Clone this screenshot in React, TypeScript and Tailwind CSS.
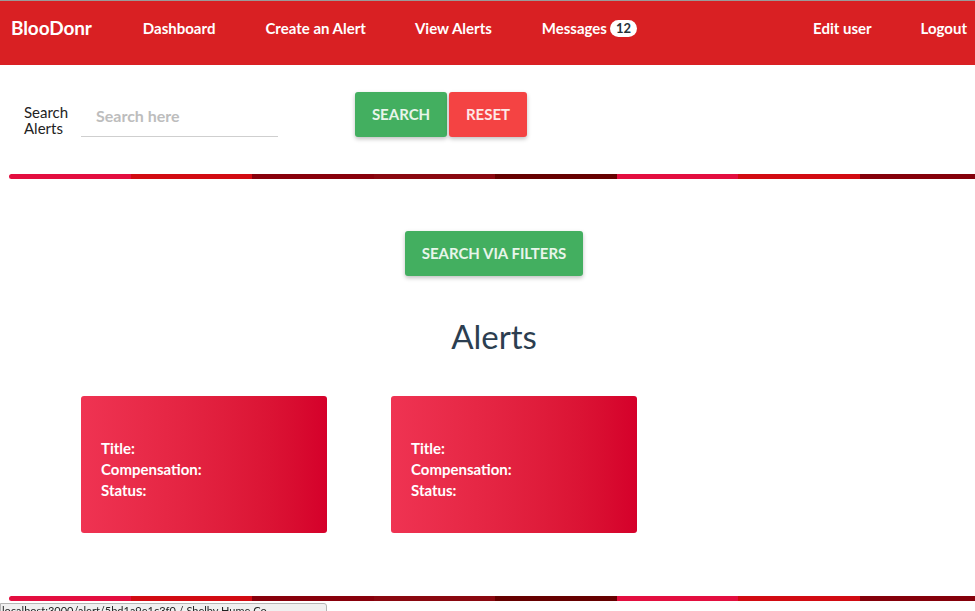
import React from 'react'

const stripeColors = ['#e30e3f', '#d20b12', '#88000b', '#8a0810', '#660000', '#e30e3f', '#d20b12', '#85000a', '#8a0810']

const Stripe = () => (
  <div className="flex h-[5px] ml-[9px] overflow-hidden rounded-l-full">
    {stripeColors.map((c, i) => (
      <div key={i} className="h-full w-[121.5px] shrink-0" style={{ backgroundColor: c }} />
    ))}
  </div>
)

const Card = () => (
  <div className="w-[246px] h-[137px] rounded-[3px] bg-gradient-to-r from-[#ef3352] to-[#d5002a] pl-[20px] pt-[42px] text-white font-bold text-[15px] leading-[21px]">
    <p>Title:</p>
    <p>Compensation:</p>
    <p>Status:</p>
  </div>
)

const App = () => {
  return (
    <div className="w-full h-[611px] overflow-hidden bg-white" style={{ fontFamily: 'Lato, "Noto Sans", sans-serif' }}>
      <div className="w-[988px]">
        <nav className="h-[65px] bg-[#d92023] border-t border-[#9a9a9a] flex items-center text-white font-bold text-[15px] pb-[9px]">
          <a className="pl-[11px] pr-[26px] text-[19px] tracking-[-0.1px]">BlooDonr</a>
          <a className="px-[25px]">Dashboard</a>
          <a className="px-[25px]">Create an Alert</a>
          <a className="pl-[24px] pr-[25px]">View Alerts</a>
          <a className="px-[25px] flex items-center">
            Messages
            <span className="ml-[3px] bg-white text-[#263238] rounded-full text-[13px] leading-[17px] px-[6px]">12</span>
          </a>
          <div className="ml-auto flex items-center">
            <a className="pl-[25px] pr-[24px]">Edit user</a>
            <a className="pl-[25px] pr-[21px]">Logout</a>
          </div>
        </nav>

        <div className="flex items-start pt-[27px] h-[109px]">
          <label className="ml-[24px] mt-[12px] w-[57px] text-[15px] leading-[16px] text-[#222]">
            <span className="block">Search</span>
            <span className="block">Alerts</span>
          </label>
          <div className="w-[197px] mt-[6px] border-b border-[#cfcfcf] h-[39px] flex items-center pl-[15px] pb-[2px] text-[16px] text-[#bdbdbd] font-bold">
            Search here
          </div>
          <button className="ml-[77px] w-[92px] h-[45px] rounded-[3px] bg-[#43af60] text-[#e8f5ea] font-bold text-[15px] shadow-[0_2px_4px_rgba(0,0,0,0.25)]">SEARCH</button>
          <button className="ml-[2px] w-[78px] h-[45px] rounded-[3px] bg-[#f44343] text-[#fde8e8] font-bold text-[15px] shadow-[0_2px_4px_rgba(0,0,0,0.25)]">RESET</button>
        </div>

        <Stripe />

        <div className="flex flex-col items-center">
          <button className="mt-[52px] w-[178px] h-[45px] rounded-[3px] bg-[#43af60] text-[#e8f5ea] font-bold text-[15px] shadow-[0_2px_4px_rgba(0,0,0,0.25)]">SEARCH VIA FILTERS</button>
          <h1 className="mt-[38px] text-[33px] leading-[44px] text-[#2c3e50]">Alerts</h1>
        </div>

        <div className="flex gap-[64px] ml-[81px] mt-[38px]">
          <Card />
          <Card />
        </div>

        <div className="mt-[63px]">
          <Stripe />
        </div>
      </div>

      <div className="fixed left-0 bottom-[-12px] w-[327px] h-[20px] bg-[#f0f0f0] border border-[#b5b5b5] rounded-tr-[3px] text-[11px] leading-[14px] px-[1px] text-[#222] whitespace-nowrap overflow-hidden">
        localhost:3000/alert/5bd1a9e1c3f0 / Shelby Hume Co
      </div>
    </div>
  )
}

export default App
